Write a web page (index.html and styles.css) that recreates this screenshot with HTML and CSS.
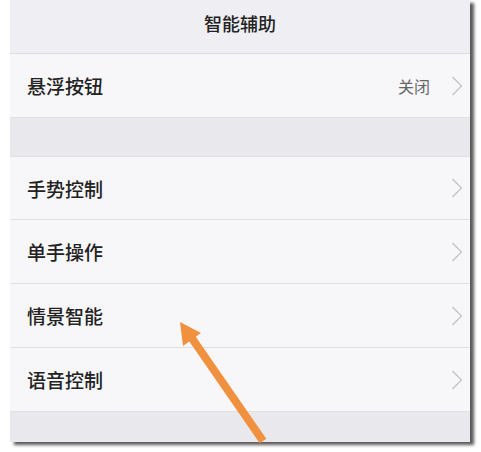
FILE: index.html
```html
<!DOCTYPE html>
<html lang="zh">
<head>
<meta charset="utf-8">
<link rel="stylesheet" href="styles.css">
</head>
<body>
<div class="page">
  <div class="panel">
    <div class="header">智能辅助</div>
    <div class="row">
      <span class="label">悬浮按钮</span>
      <span class="value">关闭</span>
      <svg class="chev" viewBox="0 0 12 20" width="12" height="20"><path d="M1.5 1 L10.5 10 L1.5 19" fill="none" stroke="#c4c3c8" stroke-width="1.3"/></svg>
    </div>
    <div class="gap"></div>
    <div class="row first">
      <span class="label">手势控制</span>
      <svg class="chev" viewBox="0 0 12 20" width="12" height="20"><path d="M1.5 1 L10.5 10 L1.5 19" fill="none" stroke="#c4c3c8" stroke-width="1.3"/></svg>
    </div>
    <div class="row">
      <span class="label">单手操作</span>
      <svg class="chev" viewBox="0 0 12 20" width="12" height="20"><path d="M1.5 1 L10.5 10 L1.5 19" fill="none" stroke="#c4c3c8" stroke-width="1.3"/></svg>
    </div>
    <div class="row">
      <span class="label">情景智能</span>
      <svg class="chev" viewBox="0 0 12 20" width="12" height="20"><path d="M1.5 1 L10.5 10 L1.5 19" fill="none" stroke="#c4c3c8" stroke-width="1.3"/></svg>
    </div>
    <div class="row">
      <span class="label">语音控制</span>
      <svg class="chev" viewBox="0 0 12 20" width="12" height="20"><path d="M1.5 1 L10.5 10 L1.5 19" fill="none" stroke="#c4c3c8" stroke-width="1.3"/></svg>
    </div>
    <div class="footer"></div>
  </div>
  <svg class="arrow" width="481" height="452" viewBox="0 0 481 452">
    <line x1="263" y1="441" x2="189" y2="334" stroke="#f0913f" stroke-width="8" stroke-linecap="butt"/>
    <polygon points="180,322 201,333 183,346" fill="#f0913f"/>
  </svg>
</div>
</body>
</html>
```

FILE: styles.css
```css
html, body {
  margin: 0;
  padding: 0;
  background: #ffffff;
}
.page {
  position: relative;
  width: 481px;
  height: 452px;
  overflow: hidden;
  font-family: "Noto Sans CJK SC", "Noto Sans", sans-serif;
}
.panel {
  margin-left: 10px;
  width: 460px;
  background: #f7f6f9;
  box-shadow: 4px 3px 3px rgba(0, 0, 0, 0.65);
}
.header {
  height: 54px;
  box-sizing: border-box;
  padding-top: 10px;
  text-align: center;
  font-size: 18px;
  font-weight: 500;
  line-height: 26px;
  color: #222222;
  background: #efeef2;
  border-bottom: 1px solid #dcdbe0;
}
.row {
  height: 64px;
  box-sizing: border-box;
  display: flex;
  align-items: center;
  padding-left: 17px;
  padding-right: 7px;
  border-bottom: 1px solid #e0dfe4;
  background: #f7f6f9;
}
.row.first {
  height: 63px;
}
.label {
  flex: 1;
  font-size: 19px;
  font-weight: 500;
  color: #222222;
}
.value {
  font-size: 16px;
  color: #666666;
  margin-right: 21px;
}
.chev {
  display: block;
}
.gap {
  height: 39px;
  background: #e9e8ec;
  border-bottom: 1px solid #e0dfe4;
  box-sizing: border-box;
}
.footer {
  height: 30px;
  background: #e9e8ec;
}
.arrow {
  position: absolute;
  left: 0;
  top: 0;
}
```
